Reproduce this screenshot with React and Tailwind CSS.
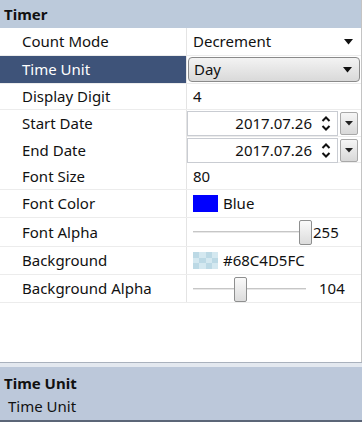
import React from 'react'

const font = { fontFamily: '"Noto Sans", "Open Sans", sans-serif' }

function Arrow() {
  return (
    <svg width="9" height="6" viewBox="0 0 9 6" className="shrink-0">
      <path d="M0 0 H9 L4.5 5.5 Z" fill="#111" />
    </svg>
  )
}

function Spin() {
  return (
    <svg width="10" height="17" viewBox="0 0 10 17" className="shrink-0">
      <path d="M1.5 6 L5 2.5 L8.5 6" stroke="#111" strokeWidth="2" fill="none" />
      <path d="M1.5 11 L5 14.5 L8.5 11" stroke="#111" strokeWidth="2" fill="none" />
    </svg>
  )
}

function DatePicker({ value }) {
  return (
    <div className="flex items-center h-full py-[1px] pr-[3px]">
      <div className="flex-1 h-full border border-[#c9ccd2] flex items-center justify-end pr-[6px] gap-[9px] bg-white">
        <span className="text-[15px] text-[#111]">{value}</span>
        <Spin />
      </div>
      <div className="ml-[2px] w-[18px] h-[23px] border border-[#a8a8a8] rounded-[2px] bg-gradient-to-b from-[#f6f6f6] to-[#d8d8d8] flex items-center justify-center">
        <svg width="8" height="5" viewBox="0 0 8 5"><path d="M0 0 H8 L4 4.5 Z" fill="#222" /></svg>
      </div>
    </div>
  )
}

function Slider({ pos, value }) {
  return (
    <div className="flex items-center h-full pl-[6px]">
      <div className="relative w-[113px] h-full">
        <div className="absolute left-0 right-0 top-1/2 h-[2px] -mt-[1px] bg-[#c6c6c6] border-b border-[#e8e8e8]" />
        <div
          className="absolute top-[2px] bottom-[1px] w-[13px] rounded-[2px] border border-[#8e8f8f] bg-gradient-to-b from-[#fafafa] to-[#dcdcdc]"
          style={{ left: pos }}
        />
      </div>
      <span className="text-[15px] text-[#111] ml-[7px]">{value}</span>
    </div>
  )
}

function Row({ label, h, selected, children }) {
  return (
    <div className={`grid grid-cols-[187px_1fr] border-b border-[#ececec] ${h}`}>
      <div
        className={`flex items-center pl-[22px] text-[15px] border-r border-[#e4e4e4] ${
          selected ? 'bg-[#3e5379] text-white' : 'bg-white text-[#111]'
        }`}
      >
        {label}
      </div>
      <div className="min-w-0">{children}</div>
    </div>
  )
}

export default function App() {
  return (
    <div className="w-[362px] h-[422px] bg-white flex flex-col overflow-hidden" style={font}>
      <div className="flex-1 flex flex-col border-r border-[#c4c4c4]">
        <div className="h-[28px] bg-[#bccadb] flex items-center pl-[4px] text-[15px] font-bold text-[#111]">Timer</div>

        <Row label="Count Mode" h="h-[28px]">
          <div className="flex items-center justify-between h-full pl-[6px] pr-[8px] text-[15px] text-[#111]">
            <span>Decrement</span>
            <Arrow />
          </div>
        </Row>

        <Row label="Time Unit" h="h-[28px]" selected>
          <div className="h-full py-[1px] pl-[1px] pr-[1px]">
            <div className="h-full rounded-[4px] border border-[#8a8a8a] bg-gradient-to-b from-[#f3f3f3] to-[#d9d9d9] flex items-center justify-between pl-[5px] pr-[7px] text-[15px] text-[#111]">
              <span>Day</span>
              <Arrow />
            </div>
          </div>
        </Row>

        <Row label="Display Digit" h="h-[26px]">
          <div className="flex items-center h-full pl-[6px] text-[15px] text-[#111]">4</div>
        </Row>

        <Row label="Start Date" h="h-[27px]">
          <DatePicker value="2017.07.26" />
        </Row>

        <Row label="End Date" h="h-[26px]">
          <DatePicker value="2017.07.26" />
        </Row>

        <Row label="Font Size" h="h-[27px]">
          <div className="flex items-center h-full pl-[6px] text-[15px] text-[#111]">80</div>
        </Row>

        <Row label="Font Color" h="h-[28px]">
          <div className="flex items-center h-full pl-[6px] text-[15px] text-[#111]">
            <div className="w-[25px] h-[17px] bg-[#0000ff] mr-[5px]" />
            <span>Blue</span>
          </div>
        </Row>

        <Row label="Font Alpha" h="h-[29px]">
          <Slider pos={106} value="255" />
        </Row>

        <Row label="Background" h="h-[28px]">
          <div className="flex items-center h-full pl-[6px] text-[15px] text-[#111]">
            <div className="w-[25px] h-[17px] mr-[5px] grid grid-cols-4 grid-rows-3">
              {Array.from({ length: 12 }).map((_, i) => (
                <div key={i} className={(Math.floor(i / 4) + i) % 2 ? 'bg-[#d4e8f0]' : 'bg-[#bcd9e5]'} />
              ))}
            </div>
            <span>#68C4D5FC</span>
          </div>
        </Row>

        <Row label="Background Alpha" h="h-[28px]">
          <div className="flex items-center h-full pl-[6px]">
            <div className="relative w-[113px] h-full">
              <div className="absolute left-0 right-0 top-1/2 h-[2px] -mt-[1px] bg-[#c6c6c6] border-b border-[#e8e8e8]" />
              <div className="absolute top-[2px] bottom-[0px] w-[13px] rounded-[2px] border border-[#8e8f8f] bg-gradient-to-b from-[#fafafa] to-[#dcdcdc] left-[41px]" />
            </div>
            <span className="text-[15px] text-[#111] ml-[13px]">104</span>
          </div>
        </Row>

        <div className="flex-1" />
      </div>

      <div className="h-[1px] bg-[#a9b1bd]" />
      <div className="h-[4px] bg-[#e3e8ef]" />
      <div className="h-[53px] bg-[#bcc8da] flex flex-col justify-center pl-[4px] text-[15px] text-[#111]">
        <div className="font-bold leading-[24px]">Time Unit</div>
        <div className="pl-[4px] leading-[22px]">Time Unit</div>
      </div>
      <div className="h-[2px] bg-[#5b6577]" />
    </div>
  )
}
